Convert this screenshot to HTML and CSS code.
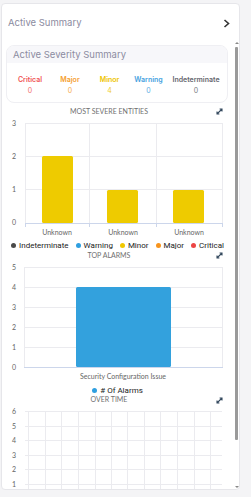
FILE: index.html
```html
<!DOCTYPE html>
<html lang="en">
<head>
    <meta charset="UTF-8">
    <meta name="viewport" content="width=device-width, initial-scale=1.0">
    <title>Active Summary</title>
    <link rel="stylesheet" href="styles.css">
</head>
<body>
    <div class="panel">
        <div class="panel-head">
            <span>Active Summary</span>
            <svg class="chevron" width="7" height="9" viewBox="0 0 7 9"><path d="M1.5 1 L5.5 4.5 L1.5 8" fill="none" stroke="#333" stroke-width="1.6"/></svg>
        </div>

        <div class="panel-body">
            <div class="content">
                <div class="sev-card">
                    <div class="sev-head">Active Severity Summary</div>
                    <div class="sev-grid">
                        <div class="sev critical"><b>Critical</b><span>0</span></div>
                        <div class="sev major"><b>Major</b><span>0</span></div>
                        <div class="sev minor"><b>Minor</b><span>4</span></div>
                        <div class="sev warning"><b>Warning</b><span>0</span></div>
                        <div class="sev indeterminate"><b>Indeterminate</b><span>0</span></div>
                    </div>
                </div>

                <!-- most severe entities -->
                <div class="chart-title t1">MOST SEVERE ENTITIES
                    <svg class="expand" width="7" height="7" viewBox="0 0 7 7"><path d="M1 6 L6 1 M3.6 1 H6 V3.4 M1 3.6 V6 H3.4" fill="none" stroke="#34495e" stroke-width="1.1"/></svg>
                </div>
                <svg class="plot" width="231" height="124" viewBox="2 117 231 124">
                    <g stroke="#ebebef" stroke-width="1">
                        <path d="M25.5 124 V224 M89.5 124 V224 M156.5 124 V224 M222.5 124 V224"/>
                        <path d="M25 124.5 H223 M25 157.5 H223 M25 190.5 H223"/>
                    </g>
                    <path d="M25 224.5 H223" stroke="#ccd6eb"/>
                    <path d="M25.5 224 V228 M89.5 224 V228 M156.5 224 V228 M222.5 224 V228" stroke="#ccd6eb"/>
                    <g class="ylab">
                        <text x="14" y="127">3</text>
                        <text x="14" y="160">2</text>
                        <text x="14" y="193">1</text>
                        <text x="14" y="226">0</text>
                    </g>
                    <g fill="#eecb00">
                        <rect x="42" y="157" width="31" height="67" rx="1.5"/>
                        <rect x="107" y="191" width="31" height="33" rx="1.5"/>
                        <rect x="173" y="191" width="31" height="33" rx="1.5"/>
                    </g>
                    <g class="xlab">
                        <text x="57" y="236">Unknown</text>
                        <text x="123" y="236">Unknown</text>
                        <text x="189" y="236">Unknown</text>
                    </g>
                </svg>
                <div class="legend l1">
                    <span class="item"><i class="dot" style="background:#4a4a4a"></i>Indeterminate</span>
                    <span class="item"><i class="dot" style="background:#2f9fe0"></i>Warning</span>
                    <span class="item"><i class="dot" style="background:#f0c800"></i>Minor</span>
                    <span class="item"><i class="dot" style="background:#f7941d"></i>Major</span>
                    <span class="item"><i class="dot" style="background:#ec4545"></i>Critical</span>
                </div>

                <!-- top alarms -->
                <div class="chart-title t2">TOP ALARMS
                    <svg class="expand" width="7" height="7" viewBox="0 0 7 7"><path d="M1 6 L6 1 M3.6 1 H6 V3.4 M1 3.6 V6 H3.4" fill="none" stroke="#34495e" stroke-width="1.1"/></svg>
                </div>
                <svg class="plot" width="231" height="126" viewBox="2 260 231 126">
                    <g stroke="#ebebef" stroke-width="1">
                        <path d="M24.5 268 V368 M222.5 268 V368"/>
                        <path d="M25 268.5 H223 M25 288.5 H223 M25 308.5 H223 M25 328.5 H223 M25 348.5 H223"/>
                    </g>
                    <path d="M24 368.5 H223" stroke="#ccd6eb"/>
                    <g class="ylab">
                        <text x="14" y="271">5</text>
                        <text x="14" y="291">4</text>
                        <text x="14" y="311">3</text>
                        <text x="14" y="331">2</text>
                        <text x="14" y="351">1</text>
                        <text x="14" y="371">0</text>
                    </g>
                    <rect x="76" y="288" width="95" height="80" rx="1.5" fill="#33a1dd"/>
                    <g class="xlab">
                        <text x="123" y="380">Security Configuration Issue</text>
                    </g>
                </svg>
                <div class="legend l2">
                    <span class="item"><i class="dot" style="background:#2f9fe0"></i># Of Alarms</span>
                </div>

                <!-- over time -->
                <div class="chart-title t3">OVER TIME
                    <svg class="expand" width="7" height="7" viewBox="0 0 7 7"><path d="M1 6 L6 1 M3.6 1 H6 V3.4 M1 3.6 V6 H3.4" fill="none" stroke="#34495e" stroke-width="1.1"/></svg>
                </div>
                <svg class="plot" width="231" height="90" viewBox="2 404 231 90">
                    <g stroke="#ebebef" stroke-width="1">
                        <path d="M28.5 412 V494 M45.5 412 V494 M61.5 412 V494 M78.5 412 V494 M95.5 412 V494 M111.5 412 V494 M127.5 412 V494 M144.5 412 V494 M160.5 412 V494 M177.5 412 V494 M194.5 412 V494 M210.5 412 V494"/>
                        <path d="M25 412.5 H222 M25 427.5 H222 M25 441.5 H222 M25 456.5 H222 M25 470.5 H222 M25 485.5 H222"/>
                    </g>
                    <g class="ylab">
                        <text x="14" y="415">6</text>
                        <text x="14" y="430">5</text>
                        <text x="14" y="444">4</text>
                        <text x="14" y="459">3</text>
                        <text x="14" y="473">2</text>
                        <text x="14" y="488">1</text>
                    </g>
                </svg>
            </div>

            <div class="scrollbar">
                <span class="arrow up"></span>
                <span class="thumb"></span>
                <span class="arrow down"></span>
            </div>
        </div>
    </div>
</body>
</html>
```

FILE: styles.css
```css
* {
    margin: 0;
    padding: 0;
    box-sizing: border-box;
}
body {
    font-family: Inter, Roboto, sans-serif;
    background-color: #f4f4f6;
    width: 251px;
    height: 497px;
    overflow: hidden;
}
.panel {
    margin: 3px 0 0 1px;
    width: 239px;
    height: 487px;
    background-color: #ffffff;
    border: 1px solid #e6e6ea;
    border-radius: 4px;
    display: flex;
    flex-direction: column;
}
.panel-head {
    height: 37px;
    flex-shrink: 0;
    display: flex;
    justify-content: space-between;
    align-items: center;
    padding: 0 9px 0 6px;
    font-size: 9.5px;
    color: #8b8ba0;
}
.chevron {
    margin-top: 1px;
}
.panel-body {
    flex: 1;
    display: flex;
    overflow: hidden;
}
.content {
    width: 231px;
    flex-shrink: 0;
    overflow: hidden;
}
.sev-card {
    margin: 4px 5px 0 4px;
    height: 58px;
    border: 1px solid #efeff3;
    border-radius: 8px;
    overflow: hidden;
}
.sev-head {
    height: 17px;
    line-height: 17px;
    background-color: #f7f7fa;
    padding-left: 6px;
    font-size: 9.5px;
    color: #8c8ca1;
}
.sev-grid {
    display: grid;
    grid-template-columns: 40px 40px 39px 39px 56px;
    padding: 12px 0 0 3px;
}
.sev {
    display: flex;
    flex-direction: column;
    align-items: center;
    gap: 2px;
    font-size: 7px;
    line-height: 9px;
}
.sev b {
    font-weight: 600;
}
.sev span {
    font-weight: 400;
    opacity: 0.85;
}
.critical { color: #f05656; }
.major { color: #f59e2e; }
.minor { color: #eec400; }
.warning { color: #45a2e0; }
.indeterminate { color: #66666e; }

.chart-title {
    position: relative;
    padding-right: 17px;
    text-align: center;
    font-family: Lato, sans-serif;
    font-size: 7px;
    color: #707070;
    height: 9px;
    line-height: 9px;
}
.chart-title.t1 {
    margin-top: 4px;
}
.chart-title.t2 {
    height: 8px;
    line-height: 8px;
}
.chart-title.t3 {
    height: 7px;
    line-height: 7px;
}
.expand {
    position: absolute;
    right: 10px;
    top: 1px;
}
.plot {
    display: block;
}
.ylab text {
    font-family: Lato, sans-serif;
    font-size: 7px;
    fill: #666;
    text-anchor: middle;
}
.xlab text {
    font-family: Lato, sans-serif;
    font-size: 7px;
    fill: #666;
    text-anchor: middle;
}
.legend {
    display: flex;
    justify-content: center;
    gap: 7px;
    font-family: Roboto, sans-serif;
    font-size: 8px;
    font-weight: 400;
    color: #222;
    height: 11px;
    line-height: 11px;
}
.legend .item {
    display: flex;
    align-items: center;
    gap: 3px;
}
.dot {
    width: 5px;
    height: 5px;
    border-radius: 50%;
}
.scrollbar {
    margin-left: 1px;
    width: 5px;
    display: flex;
    flex-direction: column;
    align-items: center;
}
.arrow {
    width: 0;
    height: 0;
    border-left: 2px solid transparent;
    border-right: 2px solid transparent;
}
.arrow.up {
    margin-top: 1px;
    border-bottom: 2px solid #888;
}
.arrow.down {
    margin-top: auto;
    margin-bottom: 1px;
    border-top: 2px solid #888;
}
.thumb {
    margin-top: 3px;
    width: 3px;
    height: 393px;
    background-color: #9a9a9a;
    border-radius: 1px;
}
```
